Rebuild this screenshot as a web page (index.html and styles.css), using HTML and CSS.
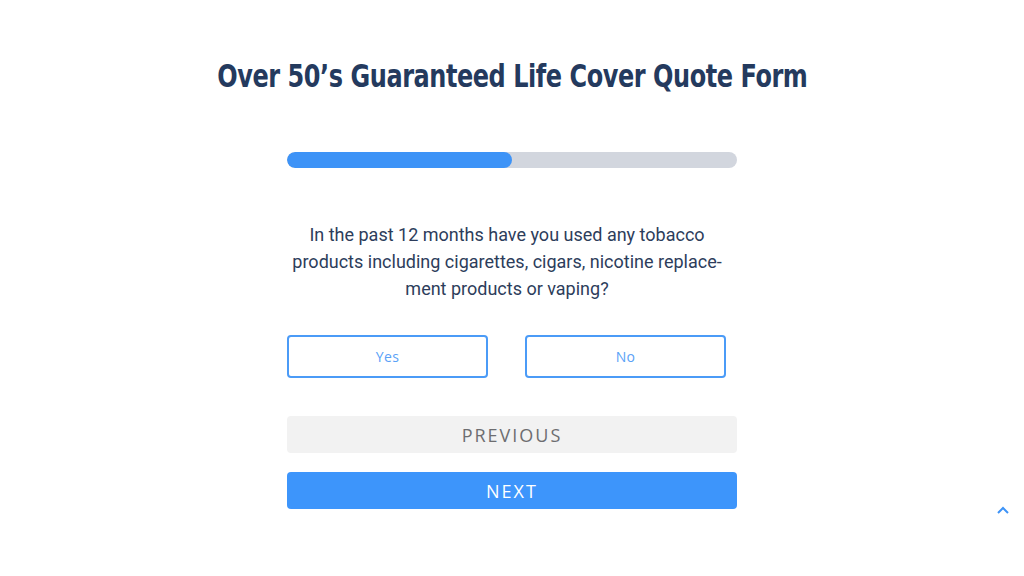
FILE: index.html
```html
<!DOCTYPE html>
<html lang="en">
<head>
<meta charset="utf-8">
<title>Quote Form</title>
<link rel="stylesheet" href="styles.css">
</head>
<body>
<main class="page">
  <h1 class="title"><span class="title-text">Over 50’s Guaranteed Life Cover Quote Form</span></h1>
  <section class="form">
    <div class="progress"><div class="progress-fill" style="width:50%"></div></div>
    <p class="question">In the past 12 months have you used any tobacco products including cigarettes, cigars, nicotine replace&shy;ment products or vaping?</p>
    <div class="choices">
      <button class="choice">Yes</button>
      <button class="choice">No</button>
    </div>
    <button class="nav prev">PREVIOUS</button>
    <button class="nav next">NEXT</button>
  </section>
</main>
<a class="to-top" href="#">
  <svg width="14" height="10" viewBox="0 0 14 10"><path d="M2 8 L7 3 L12 8" fill="none" stroke="#3d93f7" stroke-width="2"/></svg>
</a>
</body>
</html>
```

FILE: styles.css
```css
html, body { margin: 0; padding: 0; background: #fff; }
body { width: 1024px; height: 576px; overflow: hidden; position: relative; }
.page { display: flex; flex-direction: column; align-items: center; padding-top: 56px; }
.title {
  margin: 0;
  font-family: "DejaVu Sans", sans-serif;
  font-weight: 700;
  font-size: 32px;
  letter-spacing: -0.6px;
  line-height: 40px;
  color: #243a5e;
  white-space: nowrap;
}
.title-text { display: inline-block; transform: scaleX(0.75); transform-origin: center; }
.form { width: 450px; display: flex; flex-direction: column; margin-top: 56px; }
.progress { height: 16px; border-radius: 8px; background: #d2d6de; overflow: hidden; }
.progress-fill { height: 100%; background: #3d93f7; border-radius: 8px; }
.question {
  margin: 53px 0 0;
  padding-right: 10px;
  font-family: "Roboto", sans-serif;
  font-size: 18px;
  line-height: 27px;
  color: #2d3d5b;
  text-align: center;
  hyphens: manual;
}
.choices { display: flex; gap: 37px; margin-top: 33px; }
.choice {
  width: 201px; height: 43px; box-sizing: border-box;
  border: 2px solid #4b9bf7; border-radius: 4px; background: #fff;
  font-family: "Open Sans", sans-serif; font-size: 14px; color: #5aa2f7;
  letter-spacing: 0.3px;
  cursor: pointer;
}
.nav {
  height: 37px; border: 0; border-radius: 4px; width: 100%;
  font-family: "Open Sans", sans-serif; font-size: 18px; letter-spacing: 2px;
  cursor: pointer;
}
.prev { margin-top: 38px; background: #f2f2f2; color: #6d6d70; }
.next { margin-top: 19px; background: #3d95fb; color: #fff; }
.to-top { position: absolute; left: 996px; top: 505px; width: 14px; height: 10px; display: block; }
.to-top svg { display: block; }
```
